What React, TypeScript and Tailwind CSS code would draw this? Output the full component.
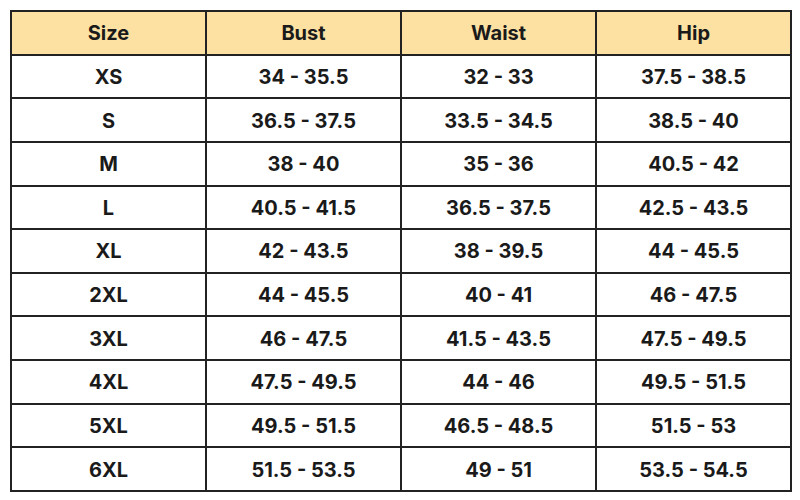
const header = ["Size", "Bust", "Waist", "Hip"];
const rows = [
  ["XS", "34 - 35.5", "32 - 33", "37.5 - 38.5"],
  ["S", "36.5 - 37.5", "33.5 - 34.5", "38.5 - 40"],
  ["M", "38 - 40", "35 - 36", "40.5 - 42"],
  ["L", "40.5 - 41.5", "36.5 - 37.5", "42.5 - 43.5"],
  ["XL", "42 - 43.5", "38 - 39.5", "44 - 45.5"],
  ["2XL", "44 - 45.5", "40 - 41", "46 - 47.5"],
  ["3XL", "46 - 47.5", "41.5 - 43.5", "47.5 - 49.5"],
  ["4XL", "47.5 - 49.5", "44 - 46", "49.5 - 51.5"],
  ["5XL", "49.5 - 51.5", "46.5 - 48.5", "51.5 - 53"],
  ["6XL", "51.5 - 53.5", "49 - 51", "53.5 - 54.5"],
];

export default function App() {
  return (
    <div className="w-[800px] h-[500px] bg-white pt-[10px] pl-[10px]" style={{ fontFamily: "Inter, 'Open Sans', sans-serif" }}>
      <div className="w-[782px] h-[482px] bg-[#222222] p-[2px] grid grid-cols-4 grid-rows-11 gap-[2px] text-[20px] font-bold text-[#1a1a1a]">
        {header.map((h) => (
          <div key={h} className="bg-[#fde1a3] flex items-center justify-center pt-[1px]">{h}</div>
        ))}
        {rows.map((r) =>
          r.map((c, i) => (
            <div key={r[0] + i} className="bg-white flex items-center justify-center pt-[1px]">{c}</div>
          ))
        )}
      </div>
    </div>
  );
}
